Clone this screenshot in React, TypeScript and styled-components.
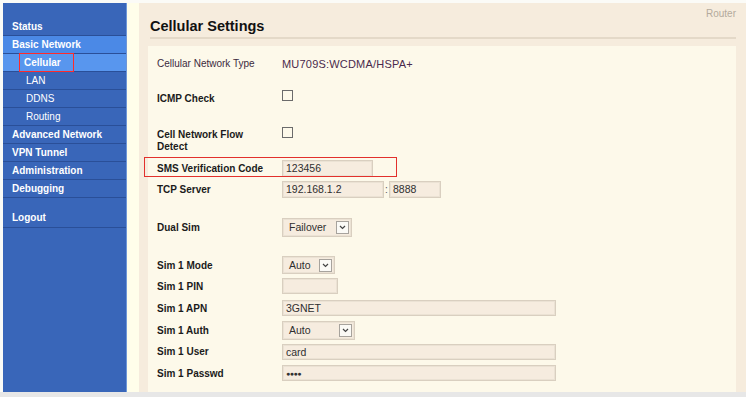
import React from "react";
import styled, { createGlobalStyle } from "styled-components";

const GlobalStyle = createGlobalStyle`
  html, body {
    margin: 0;
    padding: 0;
    background: #fbfbf7;
    font-family: "Liberation Sans", Arial, sans-serif;
    font-size: 10px;
  }
`;

const Page = styled.div`
  width: 746px;
  height: 397px;
  display: flex;
  flex-direction: column;
  overflow: hidden;
`;

const Layout = styled.div`
  display: flex;
  height: 389px;
  margin-top: 3px;
`;

const Sidebar = styled.nav`
  width: 123px;
  margin-left: 3px;
  padding-top: 15px;
  background: #3966b9;
  border-right: 1px solid #6f97d8;
  display: flex;
  flex-direction: column;
`;

const NavItem = styled.div<{ $sub?: boolean; $active?: boolean; $tall?: boolean }>`
  height: ${(p) => (p.$tall ? 20 : 17)}px;
  border-bottom: 1px solid #2a4f98;
  display: flex;
  align-items: center;
  padding-left: ${(p) => (p.$sub ? 23 : 9)}px;
  background: ${(p) => (p.$active ? "#4b89e6" : "transparent")};
  color: #ffffff;
  font-weight: ${(p) => (p.$sub ? "normal" : "bold")};
  font-size: 10px;
`;

const SelectedNav = styled(NavItem)`
  padding-left: 16px;
  background: #5896ee;
`;

const Marked = styled.span`
  display: flex;
  align-items: center;
  padding: 0 4px;
  box-sizing: border-box;
  height: 19px;
  margin-top: -1px;
  width: 55px;
  border: 1px solid #ff2a2a;
`;

const NavSpacer = styled.div`
  height: 9px;
`;

const Workspace = styled.div`
  flex: 1;
  background: #fffeea;
  padding-left: 12px;
  display: flex;
`;

const Main = styled.main`
  flex: 1;
  background: #f6ecdd;
  padding: 0 10px 0 9px;
  display: flex;
  flex-direction: column;
`;

const Header = styled.header`
  height: 34px;
  margin-left: 2px;
  border-bottom: 2px solid #e4d9c8;
  display: flex;
  justify-content: space-between;
`;

const Title = styled.h1`
  margin: 15px 0 0 0;
  font-size: 14.5px;
  font-weight: bold;
  color: #111111;
  line-height: 17px;
`;

const Brand = styled.span`
  margin-top: 5px;
  color: #b3aa9c;
  font-size: 10px;
`;

const Panel = styled.section`
  flex: 1;
  margin-top: 7px;
  background: #fdf9ea;
  padding: 7px 0 0 9px;
`;

const Row = styled.div<{ $h: number; $mark?: boolean }>`
  position: relative;
  height: ${(p) => p.$h}px;
  display: grid;
  grid-template-columns: 125px 1fr;
  align-items: center;

  ${(p) =>
    p.$mark &&
    `&::after {
      content: "";
      position: absolute;
      left: -13px;
      top: 0;
      width: 253px;
      height: 20px;
      border: 1px solid #e2302c;
      box-sizing: border-box;
    }`}
`;

const Label = styled.div<{ $plain?: boolean }>`
  font-weight: ${(p) => (p.$plain ? "normal" : "bold")};
  color: ${(p) => (p.$plain ? "#3b2a3d" : "#1b1b1b")};
  line-height: 12px;
  padding-top: 1px;
`;

const Value = styled.div`
  color: #4a2a4c;
  font-size: 11px;
  letter-spacing: 0.2px;
  padding-top: 1px;
`;

const Field = styled.div<{ $stretch?: boolean }>`
  display: flex;
  align-items: center;
  align-self: ${(p) => (p.$stretch ? "stretch" : "center")};
`;

const Check = styled.span<{ $top?: number }>`
  width: 11px;
  height: 11px;
  box-sizing: border-box;
  border: 1px solid #6b6b6b;
  align-self: ${(p) => (p.$top !== undefined ? "flex-start" : "center")};
  margin-top: ${(p) => p.$top ?? 0}px;
  position: relative;
  top: ${(p) => (p.$top !== undefined ? 0 : -3)}px;
`;

const Box = styled.div<{ $w: number; $h?: number }>`
  width: ${(p) => p.$w}px;
  height: ${(p) => p.$h ?? 16}px;
  box-sizing: border-box;
  background: #f6ecdf;
  border: 1px solid #d9cfc0;
  box-shadow: inset 0 0 0 1px #ebe2d4;
  display: flex;
  align-items: center;
  padding-left: 3px;
  color: #2f2f2f;
  font-size: 10.5px;
`;

const Colon = styled.span`
  width: 5px;
  text-align: center;
  color: #555;
`;

const Select = styled(Box)`
  justify-content: space-between;
  padding: 0 2px 0 6px;
`;

const Arrow = styled.span`
  width: 13px;
  height: 13px;
  box-sizing: border-box;
  border: 1px solid #a7a39d;
  background: #fbfaf6;
  display: flex;
  align-items: center;
  justify-content: center;
`;

const Dots = styled.span`
  font-size: 7px;
  letter-spacing: -0.5px;
  color: #333;
`;

const Footer = styled.div`
  flex: 1;
  background: #e7e7e7;
`;

const Chevron = () => (
  <svg width="7" height="5" viewBox="0 0 7 5">
    <path d="M1 1 L3.5 3.5 L6 1" fill="none" stroke="#444" strokeWidth="1.2" />
  </svg>
);

const Dropdown = ({ w, h, text }: { w: number; h: number; text: string }) => (
  <Select $w={w} $h={h}>
    <span>{text}</span>
    <Arrow>
      <Chevron />
    </Arrow>
  </Select>
);

export default function App() {
  return (
    <>
      <GlobalStyle />
      <Page>
        <Layout>
          <Sidebar>
            <NavItem>Status</NavItem>
            <NavItem $active>Basic Network</NavItem>
            <SelectedNav>
              <Marked>Cellular</Marked>
            </SelectedNav>
            <NavItem $sub>LAN</NavItem>
            <NavItem $sub>DDNS</NavItem>
            <NavItem $sub>Routing</NavItem>
            <NavItem>Advanced Network</NavItem>
            <NavItem>VPN Tunnel</NavItem>
            <NavItem>Administration</NavItem>
            <NavItem>Debugging</NavItem>
            <NavSpacer />
            <NavItem $tall>Logout</NavItem>
          </Sidebar>
          <Workspace>
            <Main>
              <Header>
                <Title>Cellular Settings</Title>
                <Brand>Router</Brand>
              </Header>
              <Panel>
                <Row $h={20}>
                  <Label $plain>Cellular Network Type</Label>
                  <Value>MU709S:WCDMA/HSPA+</Value>
                </Row>
                <Row $h={50}>
                  <Label>ICMP Check</Label>
                  <Field>
                    <Check />
                  </Field>
                </Row>
                <Row $h={34}>
                  <Label>
                    Cell Network Flow
                    <br />
                    Detect
                  </Label>
                  <Field $stretch>
                    <Check $top={4} />
                  </Field>
                </Row>
                <Row $h={22} $mark>
                  <Label>SMS Verification Code</Label>
                  <Field>
                    <Box $w={91} $h={17}>123456</Box>
                  </Field>
                </Row>
                <Row $h={20}>
                  <Label>TCP Server</Label>
                  <Field>
                    <Box $w={102} $h={17}>192.168.1.2</Box>
                    <Colon>:</Colon>
                    <Box $w={52} $h={17}>8888</Box>
                  </Field>
                </Row>
                <Row $h={56}>
                  <Label>Dual Sim</Label>
                  <Field>
                    <Dropdown w={70} h={19} text="Failover" />
                  </Field>
                </Row>
                <Row $h={20}>
                  <Label>Sim 1 Mode</Label>
                  <Field>
                    <Dropdown w={53} h={18} text="Auto" />
                  </Field>
                </Row>
                <Row $h={22}>
                  <Label>Sim 1 PIN</Label>
                  <Field>
                    <Box $w={56} />
                  </Field>
                </Row>
                <Row $h={22}>
                  <Label>Sim 1 APN</Label>
                  <Field>
                    <Box $w={274}>3GNET</Box>
                  </Field>
                </Row>
                <Row $h={22}>
                  <Label>Sim 1 Auth</Label>
                  <Field>
                    <Dropdown w={73} h={19} text="Auto" />
                  </Field>
                </Row>
                <Row $h={21}>
                  <Label>Sim 1 User</Label>
                  <Field>
                    <Box $w={274}>card</Box>
                  </Field>
                </Row>
                <Row $h={22}>
                  <Label>Sim 1 Passwd</Label>
                  <Field>
                    <Box $w={274}>
                      <Dots>●●●●</Dots>
                    </Box>
                  </Field>
                </Row>
              </Panel>
            </Main>
          </Workspace>
        </Layout>
        <Footer />
      </Page>
    </>
  );
}
